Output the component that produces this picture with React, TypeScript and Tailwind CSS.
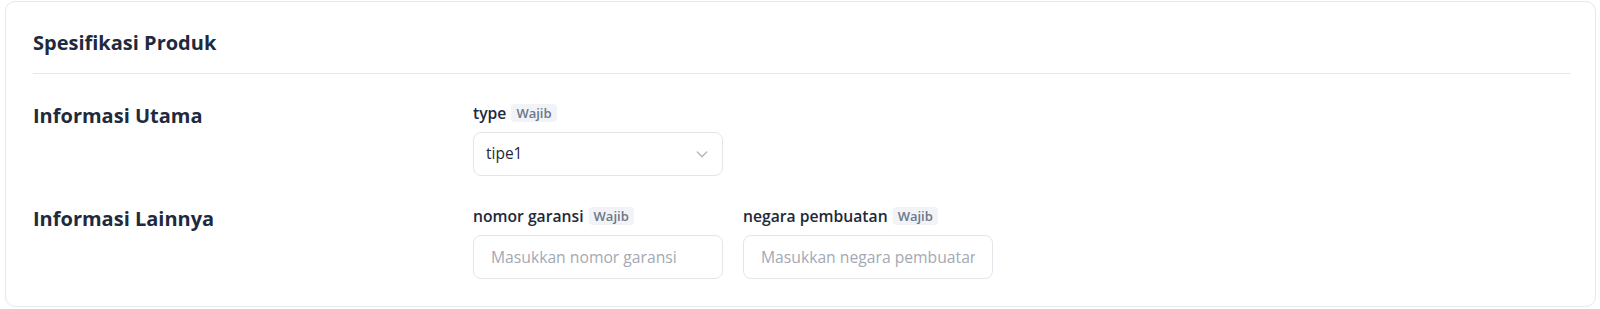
import React from "react";

function Badge() {
  return (
    <span className="ml-[5px] inline-flex h-[18px] items-center rounded-[4px] bg-[#f1f3f7] px-[5px] text-[13px] font-semibold leading-none text-[#6b778c]">
      Wajib
    </span>
  );
}

function FieldLabel({ children }: { children: React.ReactNode }) {
  return (
    <div className="flex h-[22px] items-center pt-[2px]">
      <span className="text-[15.7px] font-semibold leading-[22px] text-[#1e293b]">{children}</span>
      <Badge />
    </div>
  );
}

function TextField({ placeholder }: { placeholder: string }) {
  return (
    <input
      className="h-[44px] w-[250px] rounded-[8px] border border-[#e2e5ea] bg-white px-[17px] text-[15.7px] text-[#1e293b] outline-none placeholder:text-[#a3a9b4]"
      placeholder={placeholder}
    />
  );
}

export default function App() {
  return (
    <div className="bg-white pl-[5px] pr-[4px] pt-[1px] pb-[1px] font-['Open_Sans','Noto_Sans',sans-serif]">
      <div className="rounded-[10px] border border-[#e5e7eb] bg-white px-[27px] pt-[27px] pb-[27px]">
        <h2 className="pb-[16px] text-[20px] font-bold leading-[28px] text-[#1e2a3d]">Spesifikasi Produk</h2>
        <div className="mr-[-2px] h-px bg-[#e5e7eb]" />
        <div className="flex flex-col gap-[28px] pt-[27px]">
          <div className="flex">
            <div className="mt-[1px] w-[440px] shrink-0 text-[20px] font-bold leading-[28px] text-[#1e2a3d]">Informasi Utama</div>
            <div className="flex flex-col gap-[9px]">
              <FieldLabel>type</FieldLabel>
              <div className="flex h-[44px] w-[250px] items-center justify-between rounded-[8px] border border-[#e2e5ea] bg-white pl-[12px] pr-[12px]">
                <span className="text-[15.5px] leading-none text-[#1e293b]">tipe1</span>
                <svg width="16" height="16" viewBox="0 0 24 24" fill="none" stroke="#b3b8c0" strokeWidth="2.2" strokeLinecap="round" strokeLinejoin="round">
                  <path d="M5 9l7 7 7-7" />
                </svg>
              </div>
            </div>
          </div>
          <div className="flex">
            <div className="mt-[1px] w-[440px] shrink-0 text-[20px] font-bold leading-[28px] text-[#1e2a3d]">Informasi Lainnya</div>
            <div className="flex gap-[20px]">
              <div className="flex flex-col gap-[9px]">
                <FieldLabel>nomor garansi</FieldLabel>
                <TextField placeholder="Masukkan nomor garansi" />
              </div>
              <div className="flex flex-col gap-[9px]">
                <FieldLabel>negara pembuatan</FieldLabel>
                <TextField placeholder="Masukkan negara pembuatan" />
              </div>
            </div>
          </div>
        </div>
      </div>
    </div>
  );
}
